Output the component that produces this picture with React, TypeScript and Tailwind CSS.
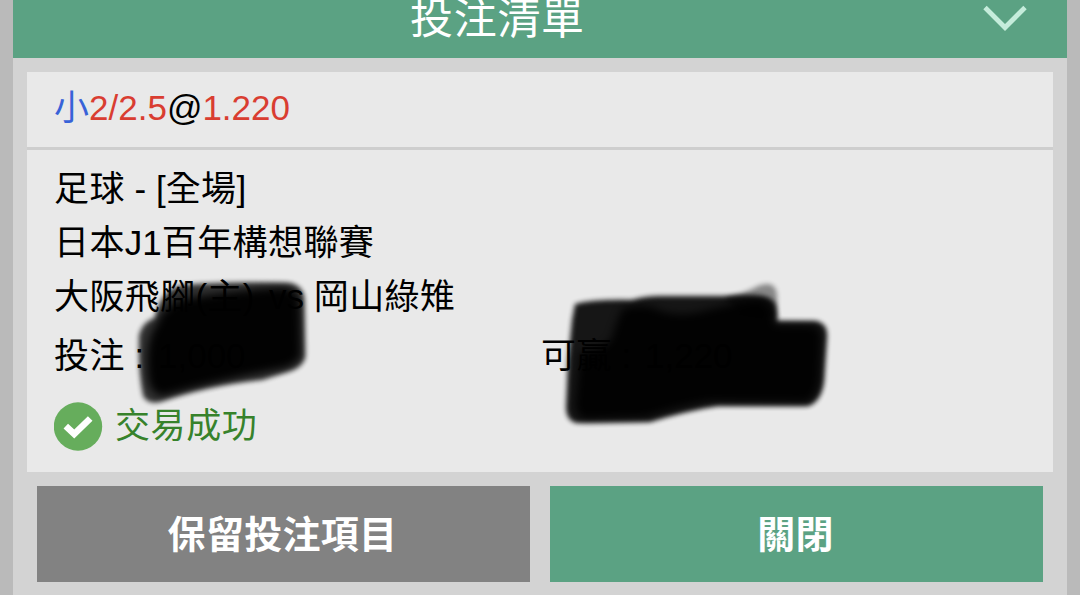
import type { ReactNode } from "react";

function Cjk({ children }: { children: ReactNode }) {
  return <span className="tracking-[0.4px]">{children}</span>;
}

function Header() {
  return (
    <header className="flex h-[58px] shrink-0 items-end justify-between bg-[#5ba283] pl-[397px] pr-[40px]">
      <h1 className="mb-[9px] text-[43px] leading-[60px] tracking-[0.7px] text-white whitespace-nowrap">
        投注清單
      </h1>
      <button aria-label="收合" className="mb-[26px]">
        <svg width="44" height="27" viewBox="0 0 44 27" fill="none">
          <path d="M2 2.5L22 22.5L42 2.5" stroke="#c5ecdb" strokeWidth="4.8" />
        </svg>
      </button>
    </header>
  );
}

// Trazos negros de rotulador sobre los importes
function Scribbles() {
  return (
    <svg
      className="pointer-events-none absolute left-0 top-0"
      width="1080"
      height="595"
      viewBox="0 0 1080 595"
    >
      <defs>
        <filter id="soft" x="-10%" y="-20%" width="120%" height="140%">
          <feGaussianBlur stdDeviation="2.4" />
        </filter>
        <filter id="softer" x="-10%" y="-20%" width="120%" height="140%">
          <feGaussianBlur stdDeviation="4.5" />
        </filter>
      </defs>
      <g fill="#000">
        <path
          filter="url(#soft)"
          opacity="0.78"
          d="M155 318Q160 290 182 285Q232 281 290 283Q303 286 304 298L305 358Q301 368 290 371L262 380Q205 385 160 402Q148 405 143 396Q138 370 139 335Q143 321 155 318Z"
        />
        <path
          filter="url(#softer)"
          opacity="0.95"
          d="M157 324Q162 307 182 299Q230 290 284 287Q299 290 300 302L301 356Q297 364 285 368Q225 379 163 396Q150 394 148 378Q144 340 157 324Z"
        />
        <path
          filter="url(#soft)"
          opacity="0.9"
          d="M575 304Q595 299 632 300Q645 296 660 296L726 296Q748 294 762 296Q775 298 776 308L777 321L816 321Q828 324 827 336L824 380Q822 401 808 406L718 406Q690 410 650 422L576 423Q566 420 566 408L568 360L572 320Z"
        />
        <path
          filter="url(#soft)"
          opacity="0.42"
          d="M724 298Q746 293 758 286Q776 279 777 296L777 318L740 312Z"
        />
        <path
          filter="url(#softer)"
          opacity="0.9"
          d="M622 309Q640 303 654 308Q674 318 700 312Q737 302 760 300Q774 307 774 325L814 326Q822 329 821 341L819 382Q815 401 804 402L710 401Q680 406 646 417L584 419Q573 415 576 398L580 352Q612 350 614 330Z"
        />
      </g>
    </svg>
  );
}

function BetCard() {
  return (
    <section className="mx-[14px] mt-[14px] h-[400px] shrink-0 bg-[#e9e9e9] text-[35px] text-black whitespace-nowrap">
      <div className="h-[78px] border-b-[3px] border-[#cecece] pl-[27px] pt-[9px] leading-[54px]">
        <span className="text-[#3862d8]">小</span>
        <span className="text-[#d93d31]">2/2.5</span>@
        <span className="text-[#d93d31]">1.220</span>
      </div>
      <div className="pl-[27px] pt-[12px] leading-[54px]">
        <p>
          <Cjk>足球</Cjk> - [<Cjk>全場</Cjk>]
        </p>
        <p>
          <Cjk>日本</Cjk>J1<Cjk>百年構想聯賽</Cjk>
        </p>
        <p>
          <Cjk>大阪飛腳</Cjk>(<Cjk>主</Cjk>)
          <span className="ml-[5px]"> vs </span>
          <Cjk>岡山綠雉</Cjk>
        </p>
        <div className="mt-[5px] flex">
          <p className="w-[487px]">
            <Cjk>投注</Cjk> : <span className="ml-[4px]">1,000</span>
          </p>
          <p>
            <Cjk>可贏</Cjk> : <span className="ml-[4px]">1,220</span>
          </p>
        </div>
        <div className="mt-[16px] flex items-center gap-[12px]">
          <svg width="49" height="49" viewBox="0 0 49 49" fill="none">
            <circle cx="24" cy="24.5" r="24.2" fill="#66ad5c" />
            <path d="M11.8 24.2L20.2 32L36.2 16.5" stroke="#fff" strokeWidth="6.6" />
          </svg>
          <span className="tracking-[0.6px] text-[#37822b]">交易成功</span>
        </div>
      </div>
    </section>
  );
}

export default function App() {
  return (
    <div className="relative h-[595px] w-[1080px] overflow-hidden bg-[#bababa] px-[13px] font-['Liberation_Sans','Noto_Sans_CJK_TC',sans-serif]">
      <main className="flex h-full flex-col bg-[#d3d3d3]">
        <Header />
        <BetCard />
        <div className="mx-6 mt-[14px] grid h-[96px] shrink-0 grid-cols-2 gap-5 text-[38px] font-bold tracking-[0.3px] text-white">
          <button className="bg-[#828282] pt-0.5 pr-0.5">保留投注項目</button>
          <button className="bg-[#5ba283] pt-0.5 pr-0.5">關閉</button>
        </div>
      </main>
      <Scribbles />
    </div>
  );
}
